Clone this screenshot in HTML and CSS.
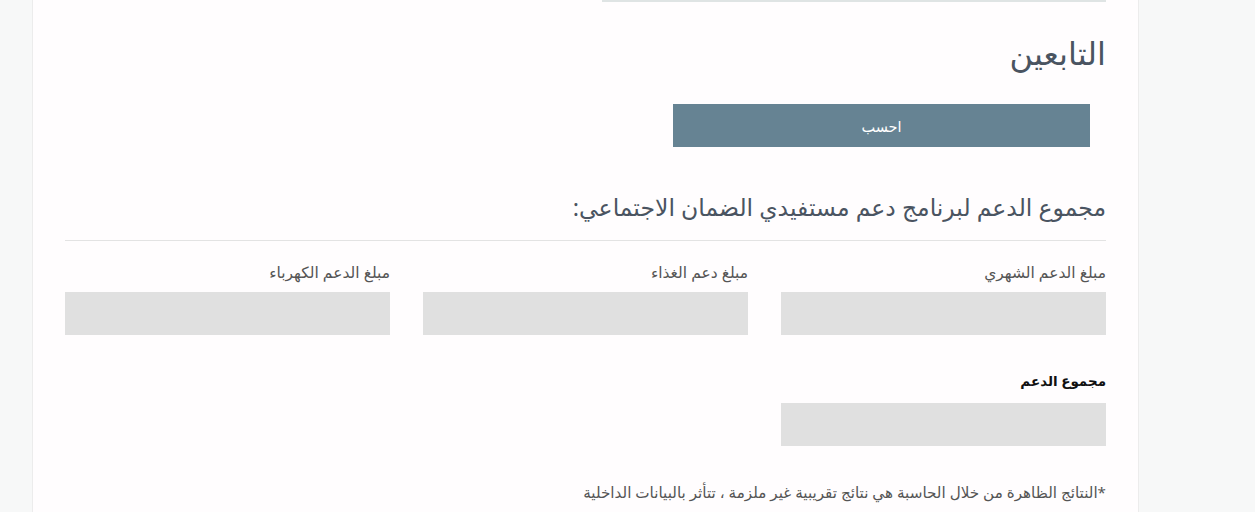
FILE: index.html
```html
<!DOCTYPE html>
<html lang="ar" dir="rtl">

<head>
  <meta charset="UTF-8">
  <meta name="viewport" content="width=device-width, initial-scale=1.0">
  <title>حاسبة الدعم</title>
  <link rel="stylesheet" href="styles.css">
</head>

<body>
  <div class="card">
    <div class="prev-row">
      <div class="prev-field"></div>
      <div class="prev-field empty"></div>
    </div>

    <h2 class="dependents-title">التابعين</h2>

    <div class="btn-row">
      <button class="calc-btn">احسب</button>
    </div>

    <h3 class="section-title">مجموع الدعم لبرنامج دعم مستفيدي الضمان الاجتماعي:</h3>
    <hr class="divider">

    <div class="result-grid">
      <div class="form-group">
        <label>مبلغ الدعم الشهري</label>
        <div class="result-box"></div>
      </div>
      <div class="form-group">
        <label>مبلغ دعم الغذاء</label>
        <div class="result-box"></div>
      </div>
      <div class="form-group">
        <label>مبلغ الدعم الكهرباء</label>
        <div class="result-box"></div>
      </div>
    </div>

    <div class="result-grid total-row">
      <div class="form-group">
        <label class="strong">مجموع الدعم</label>
        <div class="result-box"></div>
      </div>
    </div>

    <p class="note">*النتائج الظاهرة من خلال الحاسبة هي نتائج تقريبية غير ملزمة ، تتأثر بالبيانات الداخلية</p>
  </div>
</body>

</html>
```

FILE: styles.css
```css
body {
  margin: 0;
  background-color: #f7f8f8;
  font-family: "Noto Sans", "DejaVu Sans", sans-serif;
  color: #555;
}

.card {
  width: 1041px;
  margin-left: 32px;
  margin-right: auto;
  padding: 0 32px 40px;
  background: #fffdfe;
  border-left: 1px solid #ececec;
  border-right: 1px solid #ececec;
  min-height: 512px;
  box-sizing: content-box;
}

.prev-row {
  display: flex;
  gap: 33px;
  height: 2px;
  overflow: hidden;
}

.prev-field {
  width: 504px;
  border-bottom: 2px solid #dfe4e4;
}

.prev-field.empty {
  border: none;
}

.dependents-title {
  margin: 0;
  padding-top: 31px;
  font-size: 32px;
  font-weight: normal;
  color: #4a5461;
  line-height: 40px;
}

.btn-row {
  display: flex;
  margin-top: 31px;
  padding-right: 16px;
}

.calc-btn {
  width: 417px;
  height: 43px;
  background-color: #668393;
  color: #fff;
  border: none;
  font-family: inherit;
  font-size: 14.5px;
  cursor: pointer;
}

.section-title {
  margin: 44px 0 0;
  font-size: 23.5px;
  font-weight: normal;
  color: #4a5461;
  line-height: 32px;
}

.divider {
  margin: 17px 0 0;
  border: none;
  border-top: 1px solid #e3e3e3;
}

.result-grid {
  display: grid;
  grid-template-columns: repeat(3, 325px);
  gap: 33px;
  margin-top: 19px;
}

.total-row {
  margin-top: 34px;
}

.form-group label {
  display: block;
  font-size: 15.5px;
  line-height: 24px;
  margin-bottom: 8px;
  color: #555;
}

.form-group label.strong {
  font-size: 13.5px;
  font-weight: bold;
  color: #111;
  margin-bottom: 10px;
}

.result-box {
  height: 43px;
  background: #e0e0e0;
}

.note {
  margin: 34px 0 0;
  font-size: 15.2px;
  line-height: 24px;
  color: #555;
}
```
